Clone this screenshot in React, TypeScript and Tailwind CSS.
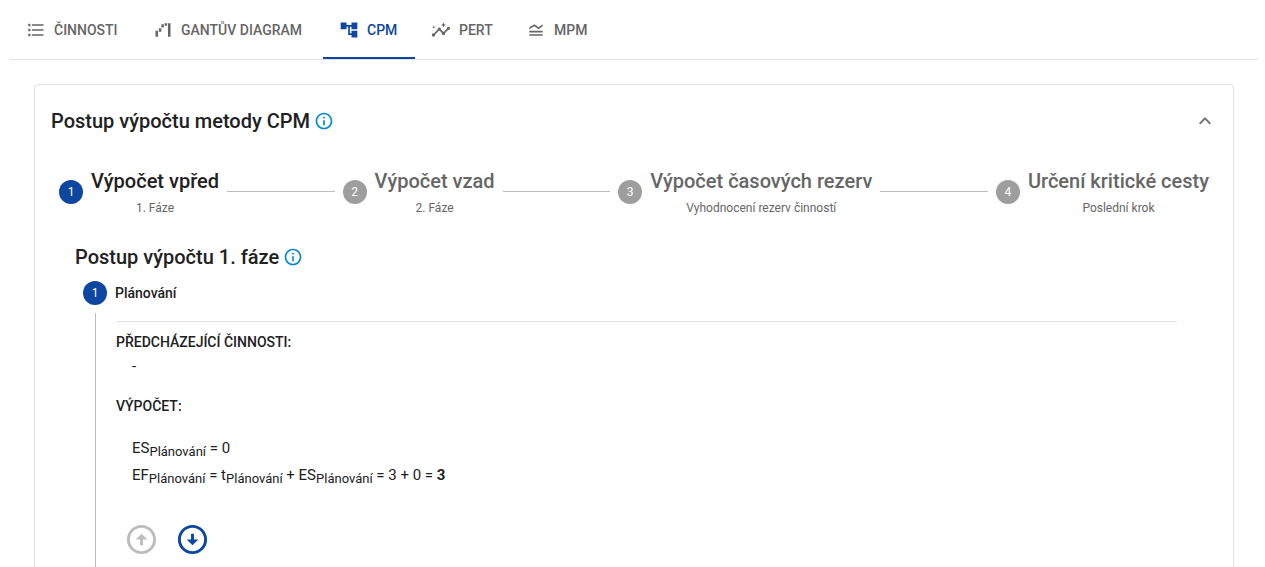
import { Fragment, type ReactNode } from "react";
import {
  MdAccountTree,
  MdArrowCircleDown,
  MdArrowCircleUp,
  MdExpandLess,
  MdFormatListBulleted,
  MdInfoOutline,
  MdInsights,
  MdLegendToggle,
  MdWaterfallChart,
} from "react-icons/md";

const tabs = [
  { label: "Činnosti", Icon: MdFormatListBulleted, width: "min-w-[127px]" },
  { label: "Gantův diagram", Icon: MdWaterfallChart, width: "min-w-[186px]" },
  { label: "CPM", Icon: MdAccountTree, width: "min-w-[92px]", active: true },
  { label: "PERT", Icon: MdInsights, width: "min-w-[95px]" },
  { label: "MPM", Icon: MdLegendToggle, width: "min-w-[95px]" },
];

const phases = [
  { title: "Výpočet vpřed", caption: "1. Fáze", active: true },
  { title: "Výpočet vzad", caption: "2. Fáze" },
  { title: "Výpočet časových rezerv", caption: "Vyhodnocení rezerv činností" },
  { title: "Určení kritické cesty", caption: "Poslední krok" },
];

function StepNumber({ value, active }: { value: number; active?: boolean }) {
  return (
    <span
      className={`flex size-6 shrink-0 items-center justify-center rounded-full text-xs text-white ${
        active ? "bg-[#0d47a1]" : "bg-[#9e9e9e]"
      }`}
    >
      {value}
    </span>
  );
}

function InfoButton({ label }: { label: string }) {
  return (
    <button type="button" aria-label={label} className="text-[#0288d1]">
      <MdInfoOutline className="size-5" />
    </button>
  );
}

function Sub({ children }: { children: ReactNode }) {
  return <sub className="text-[13px]">{children}</sub>;
}

export default function App() {
  return (
    <div className="h-screen overflow-hidden bg-white pr-[7px] pl-[10px] font-[Roboto,sans-serif] text-[#212121]">
      <div role="tablist" className="flex h-[60px] border-b border-[#e0e0e0]">
        {tabs.map(({ label, Icon, width, active }) => (
          <button
            key={label}
            type="button"
            role="tab"
            aria-selected={!!active}
            className={`flex items-center gap-2 border-b-2 px-4 pt-[2px] text-sm font-medium whitespace-nowrap uppercase ${width} ${
              active ? "border-[#0d47a1] text-[#0d47a1]" : "border-transparent text-[#666666]"
            }`}
          >
            <Icon className="size-5 shrink-0" />
            {label}
          </button>
        ))}
      </div>

      <main className="p-6">
        <section className="rounded border border-[#e0e0e0] px-4">
          <header className="flex h-[72px] items-center justify-between">
            <div className="flex items-center gap-1">
              <h1 className="text-xl leading-8 font-medium">Postup výpočtu metody CPM</h1>
              <InfoButton label="Informace o metodě CPM" />
            </div>
            <button type="button" aria-label="Sbalit" aria-expanded="true" className="text-[#757575]">
              <MdExpandLess className="size-6" />
            </button>
          </header>

          <ol className="flex items-center pt-2">
            {phases.map(({ title, caption, active }, index) => (
              <Fragment key={title}>
                {index > 0 && <li aria-hidden="true" className="h-px flex-1 bg-[#bdbdbd]" />}
                <li className="flex items-center gap-2 px-2">
                  <StepNumber value={index + 1} active={active} />
                  <div className="text-center whitespace-nowrap">
                    <div
                      className={`text-xl leading-8 font-medium ${active ? "text-[#212121]" : "text-[#666666]"}`}
                    >
                      {title}
                    </div>
                    <div className="pt-px text-xs leading-5 text-[#666666]">{caption}</div>
                  </div>
                </li>
              </Fragment>
            ))}
          </ol>

          <div className="px-6 pt-[23px] pb-6">
            <div className="flex items-center gap-1">
              <h2 className="text-xl leading-8 font-medium">Postup výpočtu 1. fáze</h2>
              <InfoButton label="Informace o 1. fázi" />
            </div>

            <div className="px-2 pt-2">
              <div className="flex items-center gap-2">
                <StepNumber value={1} active />
                <h3 className="text-sm font-medium">Plánování</h3>
              </div>
              <div className="mt-2 ml-3 border-l border-[#bdbdbd] pt-2 pr-2 pb-8 pl-5">
                <hr className="mb-2 border-[#e0e0e0]" />
                <h4 className="text-sm leading-6 font-medium uppercase">Předcházející činnosti:</h4>
                <p className="pl-4 text-[15px] leading-6">-</p>
                <h4 className="mt-4 text-sm leading-6 font-medium uppercase">Výpočet:</h4>
                <div className="mt-4 py-px pl-4 text-[15px] leading-[27px]">
                  <p>
                    ES<Sub>Plánování</Sub> = 0
                  </p>
                  <p>
                    EF<Sub>Plánování</Sub> = t<Sub>Plánování</Sub> + ES<Sub>Plánování</Sub> = 3 + 0 ={" "}
                    <strong className="font-bold">3</strong>
                  </p>
                </div>
                <div className="mt-6 flex">
                  <button type="button" disabled aria-label="Předchozí činnost" className="p-2 text-[#bdbdbd]">
                    <MdArrowCircleUp className="size-[35px]" />
                  </button>
                  <button type="button" aria-label="Další činnost" className="p-2 text-[#0d47a1]">
                    <MdArrowCircleDown className="size-[35px]" />
                  </button>
                </div>
              </div>
            </div>
          </div>
        </section>
      </main>
    </div>
  );
}
